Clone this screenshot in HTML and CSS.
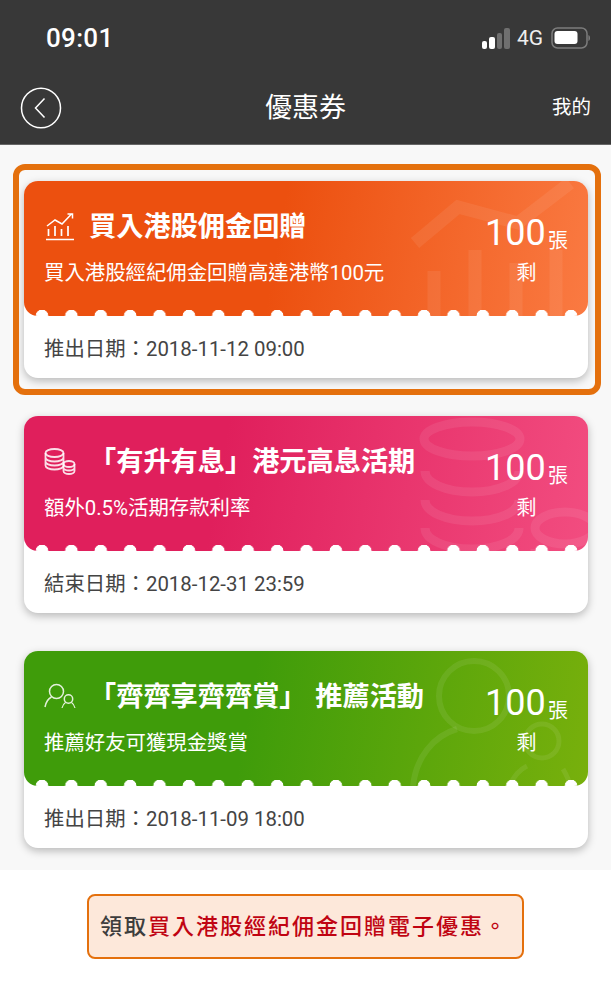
FILE: index.html
```html
<!DOCTYPE html>
<html lang="zh-Hant">
<head>
<meta charset="utf-8">
<title>優惠券</title>
<link rel="stylesheet" href="styles.css">
</head>
<body>
<div class="phone">
  <header class="header">
    <div class="status">
      <span class="time">09:01</span>
      <div class="status-right">
        <span class="signal"><i class="on s1"></i><i class="on s2"></i><i class="s3"></i><i class="s4"></i></span>
        <span class="net">4G</span>
        <svg class="battery" width="40" height="22" viewBox="0 0 40 22">
          <rect x="1" y="1" width="35" height="20" rx="5.500" fill="none" stroke="#7c7c7c" stroke-width="1.500"/>
          <rect x="3.500" y="4" width="23" height="13" rx="3" fill="#fff"/>
          <path d="M37.500 8c1.800.5 1.800 5.500 0 6z" fill="#8a8a8a"/>
        </svg>
      </div>
    </div>
    <nav class="nav">
      <svg class="back" width="42" height="42" viewBox="0 0 42 42">
        <ellipse cx="21" cy="21" rx="19.500" ry="19.800" fill="none" stroke="#fff" stroke-width="1.500"/>
        <path d="M24.500 11.500 L15.500 21 L24.500 30.500" fill="none" stroke="#fff" stroke-width="1.500"/>
      </svg>
      <span class="nav-title">優惠券</span>
      <span class="nav-mine">我的</span>
    </nav>
  </header>

  <main class="list">
    <article class="card selected">
      <div class="ticket orange">
        <svg class="mark" width="190" height="135" viewBox="0 0 190 135" fill="none" stroke="#fff" stroke-opacity=".07">
          <path d="M17 62 L60 26 L120 42 L172 2" stroke-width="13"/>
          <path d="M36 90V135M77 69V135M118 82V135M158 69V135" stroke-width="13"/>
        </svg>
        <div class="ticket-main">
          <div class="title-row">
            <svg class="icon" width="30" height="30" viewBox="0 0 30 30" fill="none" stroke="#fff" stroke-width="1.500">
              <path d="M1 27.500H29"/>
              <path d="M2 14 L10 8 L17 12 L27 1.500M22.500 2H27.500V6.500"/>
              <path d="M3.500 17V24M10 14V24M16.500 17V24M23 14V24" stroke-width="1.700"/>
            </svg>
            <h2 class="title">買入港股佣金回贈</h2>
          </div>
          <p class="desc">買入港股經紀佣金回贈高達港幣100元</p>
        </div>
        <div class="count"><div class="count-top"><b>100</b><span>張</span></div><div class="count-sub">剩</div></div>
      </div>
      <div class="date">推出日期：2018-11-12 09:00</div>
    </article>

    <article class="card">
      <div class="ticket pink">
        <svg class="mark" width="190" height="135" viewBox="0 0 190 135" fill="none" stroke="#fff" stroke-opacity=".08" stroke-width="9">
          <ellipse cx="74" cy="23" rx="48" ry="17"/>
          <path d="M27 55c0 12 21 21 47 21s47-9 47-21M27 84c0 12 21 21 47 21s47-9 47-21M27 112c0 12 21 21 47 21s47-9 47-21"/>
          <ellipse cx="167" cy="112" rx="30" ry="16"/>
          <path d="M137 133c0 6 4 10 8 14"/>
        </svg>
        <div class="ticket-main">
          <div class="title-row">
            <svg class="icon" width="32" height="30" viewBox="0 0 32 30" fill="none" stroke="#fff" stroke-opacity=".85" stroke-width="1.800">
              <ellipse cx="10.500" cy="6" rx="9" ry="4"/>
              <path d="M1.500 6V18.500c0 2.200 4 4 9 4s9-1.800 9-4V6M1.500 10.500c0 2.200 4 4 9 4s9-1.800 9-4M1.500 14.500c0 2.200 4 4 9 4s9-1.800 9-4"/>
              <ellipse cx="25" cy="17" rx="5.500" ry="3"/>
              <path d="M19.500 17V24c0 1.700 2.500 3 5.500 3s5.500-1.300 5.500-3V17M19.500 20.500c0 1.700 2.500 3 5.500 3s5.500-1.300 5.500-3"/>
            </svg>
            <h2 class="title">「有升有息」港元高息活期</h2>
          </div>
          <p class="desc">額外0.5%活期存款利率</p>
        </div>
        <div class="count"><div class="count-top"><b>100</b><span>張</span></div><div class="count-sub">剩</div></div>
      </div>
      <div class="date">結束日期：2018-12-31 23:59</div>
    </article>

    <article class="card">
      <div class="ticket green">
        <svg class="mark" width="190" height="135" viewBox="0 0 190 135" fill="none" stroke="#fff" stroke-opacity=".08" stroke-width="6">
          <circle cx="76" cy="45" r="35"/>
          <path d="M15 135c3-28 20-50 44-57"/>
          <circle cx="144" cy="90" r="17" stroke-width="5"/>
          <path d="M112 135c3-9 9-16 17-20M165 118c3 5 6 11 7 17" stroke-width="5"/>
        </svg>
        <div class="ticket-main">
          <div class="title-row">
            <svg class="icon" width="32" height="30" viewBox="0 0 32 30" fill="none" stroke="#fff" stroke-opacity=".85" stroke-width="1.500">
              <circle cx="12.500" cy="9.500" r="7"/>
              <path d="M1 25c1-5.500 3.500-8.500 6.500-10"/>
              <circle cx="24.500" cy="17" r="4.200"/>
              <path d="M18 26c.5-2.500 2-4.500 3.500-5.500M27.500 20.500c1.500 1 3 3 3.500 5.500" stroke-width="1.200"/>
            </svg>
            <h2 class="title title-spaced">「齊齊享齊齊賞」 推薦活動</h2>
          </div>
          <p class="desc">推薦好友可獲現金獎賞</p>
        </div>
        <div class="count"><div class="count-top"><b>100</b><span>張</span></div><div class="count-sub">剩</div></div>
      </div>
      <div class="date">推出日期：2018-11-09 18:00</div>
    </article>
  </main>

  <footer class="footer">
    <div class="notice">領取<em>買入港股經紀佣金回贈電子優惠。</em></div>
  </footer>
</div>
</body>
</html>
```

FILE: styles.css
```css
* { box-sizing: border-box; }
html, body { margin: 0; padding: 0; }
body {
  background: #fff;
  font-family: Roboto, "Noto Sans CJK TC", sans-serif;
  color: #444;
}
.phone { width: 611px; height: 994px; overflow: hidden; }

.header {
  height: 145px;
  background: #383838;
  border-bottom: 1px solid #666;
  color: #fff;
  display: flex;
  flex-direction: column;
}
.status {
  height: 76px;
  padding: 0 20px 0 46px;
  display: flex;
  align-items: center;
  justify-content: space-between;
}
.time { font-size: 26px; font-weight: 500; letter-spacing: .3px; }
.status-right { display: flex; align-items: center; }
.signal { display: flex; align-items: flex-end; gap: 2px; height: 21px; margin-right: 7px; }
.signal i { display: block; width: 5.500px; border-radius: 2px; background: #6f6f6f; }
.signal .on { background: #fff; }
.s1 { height: 8px; }
.s2 { height: 12px; }
.s3 { height: 16px; }
.s4 { height: 21px; }
.net { font-size: 21px; margin-right: 8px; color: #eee; }
.battery { display: block; }

.nav {
  flex: 1;
  position: relative;
  display: flex;
  align-items: center;
  justify-content: space-between;
  padding: 0 20px 5px 20px;
}
.back { display: block; }
.nav-title {
  position: absolute;
  left: 0;
  right: 0;
  top: 10px;
  text-align: center;
  font-size: 27px;
  line-height: 44px;
}
.nav-mine { font-size: 19.500px; line-height: 28px; }

.list {
  height: 725px;
  background: #f8f8f8;
  padding: 36px 23px 0 24px;
  display: flex;
  flex-direction: column;
  gap: 38px;
}
.card {
  position: relative;
  height: 197px;
  background: #fff;
  border-radius: 14px;
  box-shadow: 0 3px 8px rgba(0, 0, 0, .26);
}
.selected::before {
  content: "";
  position: absolute;
  inset: -17px -13px -17px -11px;
  border: 6px solid #e4700d;
  border-radius: 12px;
  pointer-events: none;
}
.ticket {
  position: relative;
  height: 135px;
  border-radius: 14px;
  overflow: hidden;
  color: #fff;
  display: flex;
  justify-content: space-between;
  padding: 0 20px 0 20px;
}
.ticket::after {
  content: "";
  position: absolute;
  left: 0;
  right: 0;
  bottom: 0;
  height: 6px;
  background-image: radial-gradient(circle at 50% 100%, #fff 6px, transparent 6.600px);
  background-size: 29.400px 6px;
  background-position: 3.300px 0;
  background-repeat: repeat-x;
}
.orange { background: linear-gradient(100deg, #ec500f 45%, #fa7a42 100%); }
.pink { background: linear-gradient(100deg, #e01f5c 35%, #f24d80 100%); }
.green { background: linear-gradient(100deg, #3f9c0a 40%, #78b00c 100%); }
.mark { position: absolute; right: 0; top: 0; }

.ticket-main { position: relative; padding-top: 28px; }
.title-row { display: flex; align-items: center; height: 36px; }
.icon { display: block; width: 32px; flex: none; margin-right: 13px; }
.title { margin: 0; font-size: 27.200px; line-height: 36px; font-weight: 700; white-space: pre; }
.title-spaced { word-spacing: 2px; }
.desc { margin: 13px 0 0; font-size: 20.400px; line-height: 30px; font-weight: 400; }

.count { position: relative; width: 83px; text-align: center; padding-top: 29px; }
.count-top { display: flex; align-items: flex-end; justify-content: space-between; height: 46px; }
.count-top b { font-size: 36px; line-height: 46px; font-weight: 400; }
.count-top span { font-size: 20px; line-height: 30px; }
.count-sub { font-size: 20px; line-height: 30px; margin-top: 2px; }

.date {
  height: 62px;
  padding: 0 20px;
  font-size: 20.400px;
  line-height: 66px;
  color: #444;
}

.footer {
  height: 124px;
  background: #fff;
  padding-top: 24px;
  display: flex;
  justify-content: center;
  align-items: flex-start;
}
.notice {
  width: 437px;
  height: 65px;
  border: 2px solid #e4700d;
  border-radius: 8px;
  background: #fde8da;
  padding-left: 11px;
  font-size: 22px;
  line-height: 61px;
  font-weight: 500;
  letter-spacing: 2px;
  white-space: nowrap;
  color: #3d3d3d;
}
.notice em { font-style: normal; color: #c00412; }
```
